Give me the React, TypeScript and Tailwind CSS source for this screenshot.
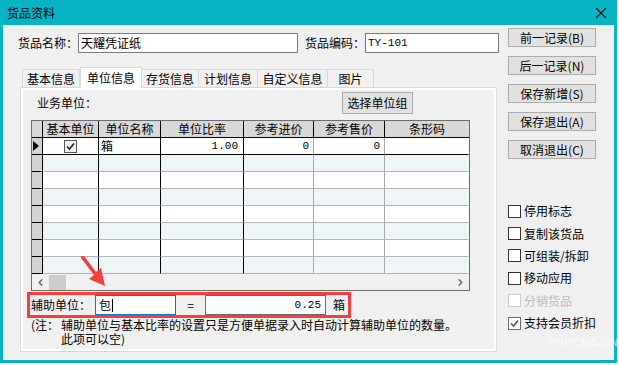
import { ChevronLeft, ChevronRight } from "lucide-react";

const tabs = [
  { label: "基本信息", w: "w-[58px]" },
  { label: "单位信息", w: "w-[62px]", active: true },
  { label: "存货信息", w: "w-[58px]" },
  { label: "计划信息", w: "w-[60px]" },
  { label: "自定义信息", w: "w-[71px]" },
  { label: "图片", w: "w-[47px]" },
];

const columns = [
  { title: "基本单位", w: "w-[56px]", line: "border-r-black" },
  { title: "单位名称", w: "w-[62px]", line: "border-r-black" },
  { title: "单位比率", w: "w-[83px]", line: "border-r-black" },
  { title: "参考进价", w: "w-[70px]", line: "border-r-[#a8a8a8]" },
  { title: "参考售价", w: "w-[71px]", line: "border-r-[#a8a8a8]" },
  { title: "条形码", w: "w-[84px]", line: "border-r-transparent" },
];

const buttons = ["前一记录(B)", "后一记录(N)", "保存新增(S)", "保存退出(A)", "取消退出(C)"];

const options = [
  { label: "停用标志" },
  { label: "复制该货品" },
  { label: "可组装/拆卸" },
  { label: "移动应用" },
  { label: "分销货品", disabled: true },
  { label: "支持会员折扣", checked: true },
];

function Check({ color = "#222" }: { color?: string }) {
  return (
    <svg width="11" height="11" viewBox="0 0 11 11">
      <path d="M2 5.5 L4.5 8 L9 2.5" fill="none" stroke={color} strokeWidth="1.6" />
    </svg>
  );
}

export default function App() {
  return (
    <div className="relative w-[619px] h-[365px] overflow-hidden bg-white font-['Noto_Sans_CJK_SC',sans-serif] text-[12px] leading-[14px] text-black whitespace-nowrap">
      <div className="w-[617px] h-[363px] flex flex-col">
        {/* title bar */}
        <div className="h-[25px] shrink-0 bg-[#06b4c4] flex items-center justify-between pl-[7px] pr-[10px]">
          <span>货品资料</span>
          <svg width="12" height="12" viewBox="0 0 12 12">
            <path d="M1 1 L11 11 M11 1 L1 11" stroke="#111" strokeWidth="1.1" />
          </svg>
        </div>

        <div className="flex-1 flex bg-[#f0f0f0] border-x-[3px] border-b-[3px] border-[#06b4c4]">
          {/* left side */}
          <div className="w-[497px] shrink-0 pt-[8px]">
            <div className="flex items-center h-[20px]">
              <span className="ml-[15px] w-[60px] shrink-0">货品名称：</span>
              <div className="w-[220px] h-[20px] border border-[#7a7a7a] bg-white flex items-center pl-[2px]">天耀凭证纸</div>
              <span className="ml-[7px] w-[60px] shrink-0">货品编码：</span>
              <div className="w-[134px] h-[20px] border border-[#7a7a7a] bg-white flex items-center pl-[2px] font-['Liberation_Mono',monospace] text-[11px]">TY-101</div>
            </div>

            {/* tabs */}
            <div className="flex items-end h-[20px] mt-[14px] ml-[19px]">
              {tabs.map((t) =>
                t.active ? (
                  <div key={t.label} className={`${t.w} h-[21px] -mb-px z-10 bg-white border-x border-t border-[#d9d9d9] flex items-center justify-center`}>
                    {t.label}
                  </div>
                ) : (
                  <div key={t.label} className={`${t.w} h-[18px] bg-[#f0f0f0] border-x border-t border-[#d9d9d9] -ml-px first:ml-0 flex items-center justify-center`}>
                    {t.label}
                  </div>
                )
              )}
            </div>

            {/* tab panel */}
            <div className="ml-[17px] w-[477px] h-[265px] border border-[#d9d9d9]">
              <div className="h-full border-2 border-white bg-[#f0f0f0]">
                <div className="flex items-center h-[22px] mt-[2px]">
                  <span className="ml-[14px] w-[305px]">业务单位：</span>
                  <div className="w-[71px] h-[22px] bg-[#e1e1e1] border border-[#adadad] flex items-center justify-center">选择单位组</div>
                </div>

                {/* grid */}
                <div className="ml-[8px] mt-[6px] w-[439px] border border-[#6d6d6d]">
                  <div className="flex h-[17px] bg-[#d8d8d8]">
                    <div className="w-[11px] border-r border-b border-black" />
                    {columns.map((c, i) => (
                      <div key={c.title} className={`${c.w} border-b border-black ${i < 5 ? "border-r border-r-black" : ""} flex items-center justify-center`}>
                        {c.title}
                      </div>
                    ))}
                  </div>
                  {Array.from({ length: 8 }).map((_, r) => (
                    <div key={r} className={`flex h-[17px] ${r % 2 === 1 ? "bg-[#edf5f7]" : "bg-white"}`}>
                      <div className="w-[11px] bg-[#d4d4d4] border-r border-b border-black flex items-center pl-px">
                        {r === 0 && (
                          <svg width="6" height="10" viewBox="0 0 6 10">
                            <path d="M0 0 L6 5 L0 10 Z" fill="#000" />
                          </svg>
                        )}
                      </div>
                      {columns.map((c) => (
                        <div key={c.title} className={`${c.w} border-r border-b ${c.line} ${r === 0 ? "border-b-black" : "border-b-[#b4b4b4]"} flex items-center`}>
                          {r === 0 && c.title === "基本单位" && (
                            <div className="mx-auto w-[13px] h-[13px] border border-[#555] bg-[#f4f4f4] flex items-center justify-center">
                              <Check />
                            </div>
                          )}
                          {r === 0 && c.title === "单位名称" && <span className="pl-[2px]">箱</span>}
                          {r === 0 && c.title === "单位比率" && <span className="ml-auto pr-[5px] font-['Liberation_Mono',monospace] text-[11px]">1.00</span>}
                          {r === 0 && (c.title === "参考进价" || c.title === "参考售价") && (
                            <span className="ml-auto pr-[4px] font-['Liberation_Mono',monospace] text-[11px]">0</span>
                          )}
                        </div>
                      ))}
                    </div>
                  ))}
                  <div className="flex items-center h-[16px] bg-[#f0f0f0]">
                    <div className="w-[17px] flex justify-center">
                      <ChevronLeft size={11} strokeWidth={3} color="#606060" />
                    </div>
                    <div className="w-[17px] h-[15px] bg-[#cdcdcd]" />
                    <div className="ml-auto w-[17px] flex justify-center">
                      <ChevronRight size={11} strokeWidth={3} color="#606060" />
                    </div>
                  </div>
                </div>

                {/* auxiliary unit */}
                <div className="ml-[4px] mt-[1px] w-[324px] h-[26px] border-[3px] border-[#f43f3f] flex items-center">
                  <span className="ml-px w-[60px] shrink-0">辅助单位：</span>
                  <div className="ml-[4px] w-[81px] h-[20px] bg-white border border-[#0078d7] flex items-center pl-[3px]">
                    包<span className="w-px h-[13px] bg-black ml-px" />
                  </div>
                  <span className="w-[29px] text-center">=</span>
                  <div className="w-[121px] h-[20px] bg-white border border-[#6a6a6a] flex items-center justify-end pr-[4px] font-['Liberation_Mono',monospace] text-[11px]">0.25</div>
                  <span className="ml-[7px]">箱</span>
                </div>

                <div className="flex ml-[8px]">
                  <span className="w-[30px] shrink-0">(注：</span>
                  <span className="w-[400px] whitespace-normal">辅助单位与基本比率的设置只是方便单据录入时自动计算辅助单位的数量。此项可以空)</span>
                </div>
              </div>
            </div>
          </div>

          {/* right side */}
          <div className="ml-[8px] w-[88px] pt-[3px] flex flex-col">
            <div className="flex flex-col gap-[9px]">
              {buttons.map((b) => (
                <div key={b} className="h-[19px] bg-[#e1e1e1] border border-[#adadad] flex items-center justify-center">
                  {b}
                </div>
              ))}
            </div>
            <div className="mt-[41px] flex flex-col">
              {options.map((o) => (
                <div key={o.label} className="h-[22.4px] flex items-center">
                  <div
                    className={`w-[13px] h-[13px] shrink-0 border bg-white flex items-center justify-center ${
                      o.disabled ? "border-[#cccccc]" : o.checked ? "border-[#6a6a6a]" : "border-[#333]"
                    }`}
                  >
                    {o.checked && <Check color="#555" />}
                  </div>
                  <span className={`ml-[3px] ${o.disabled ? "text-[#bdbdbd]" : ""}`}>{o.label}</span>
                </div>
              ))}
            </div>
          </div>
        </div>
      </div>

      {/* red arrow annotation */}
      <svg className="absolute left-0 top-0 pointer-events-none" width="619" height="365">
        <polygon points="81,256 84,256 96,272 101,268 105,286 89,279 94,275 81,258" fill="#f43f3f" />
      </svg>

      {/* watermark */}
      <span className="absolute left-[548px] top-[335px] text-[11px] font-bold tracking-[0.5px] text-white/50 font-['Liberation_Sans',sans-serif]">
        PHPCMS.CN
      </span>
    </div>
  );
}
